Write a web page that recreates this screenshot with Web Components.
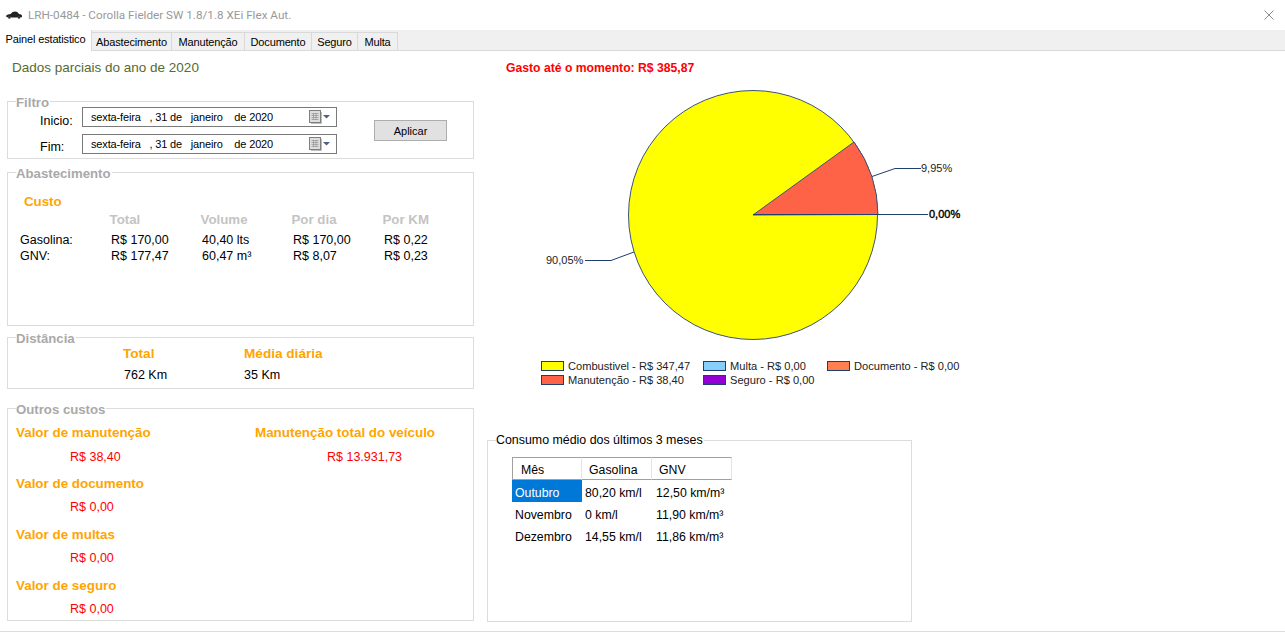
<!DOCTYPE html>
<html lang="pt-BR">
<head>
<meta charset="utf-8">
<title>Painel estatistico</title>
<style>
  html, body { margin: 0; height: 100%; background: #fff; overflow: hidden; }
  body { font: 12px/16px "Liberation Sans", Arial, sans-serif; color: #000; }
</style>
</head>
<body>
<app-window>
  <title-bar>LRH-0484 - Corolla Fielder SW 1.8/1.8 XEi Flex Aut.</title-bar>
  <tab-strip></tab-strip>
  <tab-panel>
    <div slot="left">
      <panel-heading>Dados parciais do ano de 2020</panel-heading>
      <group-box label="Filtro" style="height:58px"><filter-form></filter-form></group-box>
      <group-box label="Abastecimento" style="height:154px;margin-top:13px"><fuel-costs></fuel-costs></group-box>
      <group-box label="Distância" style="height:52px;margin-top:11px"><distance-stats></distance-stats></group-box>
      <group-box label="Outros custos" style="height:213px;margin-top:19px"><other-costs></other-costs></group-box>
    </div>
    <div slot="right">
      <spent-total>Gasto até o momento: R$ 385,87</spent-total>
      <pie-chart></pie-chart>
      <chart-legend></chart-legend>
      <group-box label="Consumo médio dos últimos 3 meses" plain style="width:425px;height:182px;margin-top:53px"><list-view></list-view></group-box>
    </div>
  </tab-panel>
</app-window>

<script>
class AppWindow extends HTMLElement {
  constructor() {
    super();
    this.attachShadow({mode: 'open'}).innerHTML = `
      <style>
        :host { display: flex; flex-direction: column; height: 632px; }
      </style>
      <slot></slot>`;
  }
}

class TitleBar extends HTMLElement {
  constructor() {
    super();
    this.attachShadow({mode: 'open'}).innerHTML = `
      <style>
        :host { display: flex; align-items: center; height: 30px; padding: 0 11px 0 6px; color: #999; font: 11.7px Roboto, "Liberation Sans", sans-serif; }
        .title { flex: 1; margin-left: 6px; }
        svg { display: block; }
      </style>
      <svg width="16" height="8" viewBox="0 0 16 8">
        <path d="M0 5.5 Q0 4 2 3.6 L4.6 3 Q6.5 .6 9 .6 Q11.5 .6 13 3 Q15.6 3.3 16 4.6 L16 6 L14.6 6.6 A1.7 1.7 0 0 0 11.4 6.6 L5 6.6 A1.7 1.7 0 0 0 1.8 6.6 Z" fill="#222"/>
        <circle cx="3.4" cy="6.4" r="1.3" fill="#333"/><circle cx="13" cy="6.4" r="1.3" fill="#333"/>
      </svg>
      <span class="title"><slot></slot></span>
      <svg width="10" height="10" viewBox="0 0 10 10"><path d="M.5 .5 L9.5 9.5 M9.5 .5 L.5 9.5" stroke="#8a8a8a" stroke-width="1"/></svg>`;
  }
}

class TabStrip extends HTMLElement {
  constructor() {
    super();
    const tabs = [['Painel estatistico', 92], ['Abastecimento', 80], ['Manutenção', 73], ['Documento', 67], ['Seguro', 46], ['Multa', 40]];
    this.attachShadow({mode: 'open'}).innerHTML = `
      <style>
        :host { display: flex; align-items: flex-end; height: 21px; background: #f0f0f0; box-shadow: inset 0 -1px 0 #d9d9d9; font-size: 11px; letter-spacing: -.15px; }
        .tab { box-sizing: border-box; height: 19px; line-height: 18px; text-align: center; background: #f0f0f0; border: 1px solid #d9d9d9; border-left: 0; }
        .tab.active { height: 21px; line-height: 19px; background: #fff; border-bottom: 0; border-top: 0; }
      </style>
      ${tabs.map((t, i) => `<div class="tab ${i == 0 ? 'active' : ''}" style="width:${t[1]}px">${t[0]}</div>`).join('')}`;
  }
}

class TabPanel extends HTMLElement {
  constructor() {
    super();
    this.attachShadow({mode: 'open'}).innerHTML = `
      <style>
        :host { display: flex; flex: 1; border-bottom: 1px solid #dcdcdc; }
        .left { width: 467px; margin-left: 7px; padding-top: 9px; }
        .right { margin-left: 13px; padding-top: 9px; }
      </style>
      <div class="left"><slot name="left"></slot></div>
      <div class="right"><slot name="right"></slot></div>`;
  }
}

class PanelHeading extends HTMLElement {
  constructor() {
    super();
    this.attachShadow({mode: 'open'}).innerHTML = `
      <style>
        :host { display: block; margin: 0 0 25px 5px; font-size: 13.5px; line-height: 16px; color: #556b2f; }
      </style>
      <slot></slot>`;
  }
}

class SpentTotal extends HTMLElement {
  constructor() {
    super();
    this.attachShadow({mode: 'open'}).innerHTML = `
      <style>
        :host { display: block; margin-left: 19px; font-weight: bold; font-size: 12.2px; line-height: 16px; color: #f00; }
      </style>
      <slot></slot>`;
  }
}

class GroupBox extends HTMLElement {
  constructor() {
    super();
    this.attachShadow({mode: 'open'}).innerHTML = `
      <style>
        :host { display: block; position: relative; box-sizing: border-box; border: 1px solid #dcdcdc; }
        .legend { position: absolute; top: -7px; left: 8px; padding-right: 1px; background: #fff; font: bold 13.2px/15px "Liberation Sans", Arial, sans-serif; color: #a9a9a9; white-space: nowrap; }
        :host([plain]) .legend { font-weight: normal; font-size: 12.4px; color: #000; top: -8px; }
      </style>
      <div class="legend">${this.getAttribute('label')}</div>
      <slot></slot>`;
  }
}

class DatePicker extends HTMLElement {
  constructor() {
    super();
    this.attachShadow({mode: 'open'}).innerHTML = `
      <style>
        :host { display: flex; align-items: center; box-sizing: border-box; width: 255px; height: 20px; padding: 0 6px 0 8px; border: 1px solid #7a7a7a; background: #fff; }
        .value { flex: 1; white-space: pre; font-size: 11px; letter-spacing: -.15px; }
        svg { display: block; }
      </style>
      <span class="value"><slot></slot></span>
      <svg width="21" height="14" viewBox="0 0 21 14">
        <rect x=".5" y=".5" width="11" height="12" fill="#dedede" stroke="#7f7f7f"/>
        <path d="M12.5 2 V13.5 H2" fill="none" stroke="#bdbdbd"/>
        <path d="M2.5 3.5 H9.5 M2.5 5.5 H9.5 M2.5 7.5 H9.5 M2.5 9.5 H9.5 M4.5 3 V10 M7 3 V10" stroke="#9a9a9a" stroke-width=".8"/>
        <path d="M14 5 H21 L17.5 8.5 Z" fill="#4d6185"/>
      </svg>`;
  }
}

class FilterForm extends HTMLElement {
  constructor() {
    super();
    this.attachShadow({mode: 'open'}).innerHTML = `
      <style>
        :host { display: grid; grid-template-columns: 42px 255px 73px; grid-template-rows: 20px 20px; row-gap: 7px; column-gap: 0; padding: 5px 0 0 32px; }
        .lbl { padding-top: 6px; line-height: 16px; font-size: 12.5px; }
        .lbl.fim { padding-top: 5px; }
        button { grid-column: 3; grid-row: 1 / 3; margin: 13px 0 0 37px; width: 73px; height: 21px; padding: 0; box-sizing: border-box; border: 1px solid #adadad; background: #e1e1e1; font: 11px "Liberation Sans", Arial, sans-serif; color: #000; }
      </style>
      <div class="lbl">Inicio:</div>
      <date-picker>sexta-feira   , 31 de   janeiro    de 2020</date-picker>
      <div class="lbl fim">Fim:</div>
      <date-picker>sexta-feira   , 31 de   janeiro    de 2020</date-picker>
      <button>Aplicar</button>`;
  }
}

class FuelCosts extends HTMLElement {
  constructor() {
    super();
    const rows = [['Gasolina:', 'R$ 170,00', '40,40 lts', 'R$ 170,00', 'R$ 0,22'], ['GNV:', 'R$ 177,47', '60,47 m³', 'R$ 8,07', 'R$ 0,23']];
    this.attachShadow({mode: 'open'}).innerHTML = `
      <style>
        :host { display: block; padding: 21px 0 0 12px; font-size: 12.5px; }
        .custo { margin-left: 4px; font: bold 13.3px/16px "Liberation Sans", Arial, sans-serif; color: #ffa500; }
        .grid { display: grid; grid-template-columns: 91px 91px 91px 91px 91px; grid-template-rows: 20px 16px 16px; margin-top: 2px; }
        .head { font-weight: bold; font-size: 13.3px; color: #c4c4c4; margin-left: -1.5px; }
      </style>
      <div class="custo">Custo</div>
      <div class="grid">
        <div class="head"></div><div class="head">Total</div><div class="head">Volume</div><div class="head">Por dia</div><div class="head">Por KM</div>
        ${rows.map(r => r.map(c => `<div>${c}</div>`).join('')).join('')}
      </div>`;
  }
}

class DistanceStats extends HTMLElement {
  constructor() {
    super();
    this.attachShadow({mode: 'open'}).innerHTML = `
      <style>
        :host { display: grid; grid-template-columns: 121px 121px; grid-auto-rows: 16px; row-gap: 5px; padding: 8px 0 0 115px; font-size: 12.5px; }
        b { color: #ffa500; font-size: 13.6px; }
      </style>
      <b>Total</b><b>Média diária</b>
      <div style="margin-left:1px">762 Km</div><div>35 Km</div>`;
  }
}

class CostItem extends HTMLElement {
  constructor() {
    super();
    this.attachShadow({mode: 'open'}).innerHTML = `
      <style>
        :host { display: block; height: 51px; box-sizing: border-box; padding-top: 16px; }
        .label { font: bold 13.4px/16px "Liberation Sans", Arial, sans-serif; color: #ffa500; white-space: nowrap; }
        .value { margin-top: ${this.hasAttribute('first') ? 8 : 7}px; padding-left: ${this.getAttribute('indent')}px; font-size: 12.5px; line-height: 16px; color: #f00; }
      </style>
      <div class="label">${this.getAttribute('label')}</div>
      <div class="value"><slot></slot></div>`;
  }
}

class OtherCosts extends HTMLElement {
  constructor() {
    super();
    this.attachShadow({mode: 'open'}).innerHTML = `
      <style>
        :host { display: grid; grid-template-columns: 239px 1fr; padding-left: 8px; }
      </style>
      <div>
        <cost-item first label="Valor de manutenção" indent="54">R$ 38,40</cost-item>
        <cost-item label="Valor de documento" indent="54">R$ 0,00</cost-item>
        <cost-item label="Valor de multas" indent="54">R$ 0,00</cost-item>
        <cost-item label="Valor de seguro" indent="54">R$ 0,00</cost-item>
      </div>
      <div>
        <cost-item first label="Manutenção total do veículo" indent="72">R$ 13.931,73</cost-item>
      </div>`;
  }
}

class PieChart extends HTMLElement {
  constructor() {
    super();
    this.attachShadow({mode: 'open'}).innerHTML = `
      <style>
        :host { display: block; width: 500px; height: 276px; margin-top: 7px; }
        svg { display: block; }
        text { font: 11px "Liberation Sans", Arial, sans-serif; fill: #222; }
      </style>
      <svg width="500" height="276" viewBox="487 83 500 276">
        <circle cx="753" cy="215" r="124.5" fill="#ffff00" stroke="#3b5378" stroke-width="1"/>
        <path d="M753 215 L878 214.5 A124.5 124.5 0 0 0 854 142 Z" fill="#ff6347" stroke="#3b5378" stroke-width="1"/>
        <path d="M872 176.5 L895 168.5 H921" fill="none" stroke="#1f3d6e"/>
        <path d="M753 214.5 H928" fill="none" stroke="#1f3d6e"/>
        <path d="M634 252 L611 260.5 H585" fill="none" stroke="#1f3d6e"/>
        <text x="921" y="172">9,95%</text>
        <text x="929" y="218" style="stroke:#000;stroke-width:.4;fill:#000">0,00%</text>
        <text x="546" y="264">90,05%</text>
      </svg>`;
  }
}

class ChartLegend extends HTMLElement {
  constructor() {
    super();
    const items = [['#ffff00', 'Combustivel - R$ 347,47'], ['#87cefa', 'Multa - R$ 0,00'], ['#ff7f50', 'Documento - R$ 0,00'], ['#ff6347', 'Manutenção - R$ 38,40'], ['#9400d3', 'Seguro - R$ 0,00']];
    this.attachShadow({mode: 'open'}).innerHTML = `
      <style>
        :host { display: grid; grid-template-columns: 162px 124px auto; grid-auto-rows: 14px; margin-left: 54px; font-size: 11.1px; color: #222; }
        .item { display: flex; align-items: center; gap: 4px; white-space: nowrap; }
        i { display: block; box-sizing: border-box; width: 23px; height: 10px; border: 1px solid #1f3d6e; }
      </style>
      ${items.map(it => `<div class="item"><i style="background:${it[0]}"></i>${it[1]}</div>`).join('')}`;
  }
}

class ListView extends HTMLElement {
  constructor() {
    super();
    const rows = [['Outubro', '80,20 km/l', '12,50 km/m³'], ['Novembro', '0 km/l', '11,90 km/m³'], ['Dezembro', '14,55 km/l', '11,86 km/m³']];
    this.attachShadow({mode: 'open'}).innerHTML = `
      <style>
        :host { display: grid; grid-template-columns: 70px 70px 80px; grid-auto-rows: 22px; width: 220px; margin: 16px 0 0 24px; font-size: 12.3px; }
        .th { box-sizing: border-box; height: 23px; padding-left: 7px; line-height: 25px; border-top: 1px solid #a0a0a0; border-bottom: 1px solid #a0a0a0; border-right: 1px solid #e5e5e5; }
        .th.first { border-left: 1px solid #a0a0a0; padding-left: 8px; }
        .td { padding-left: 3px; line-height: 27px; height: 22px; white-space: nowrap; margin-top: 1px; }
        .td.last { padding-left: 4px; }
        .sel { background: #0078d7; color: #fff; }
      </style>
      <div class="th first">Mês</div><div class="th">Gasolina</div><div class="th">GNV</div>
      ${rows.map((r, i) => r.map((c, j) => `<div class="td ${i == 0 && j == 0 ? 'sel' : ''} ${j == 2 ? 'last' : ''}">${c}</div>`).join('')).join('')}`;
  }
}

customElements.define('app-window', AppWindow);
customElements.define('title-bar', TitleBar);
customElements.define('tab-strip', TabStrip);
customElements.define('tab-panel', TabPanel);
customElements.define('panel-heading', PanelHeading);
customElements.define('spent-total', SpentTotal);
customElements.define('group-box', GroupBox);
customElements.define('date-picker', DatePicker);
customElements.define('filter-form', FilterForm);
customElements.define('fuel-costs', FuelCosts);
customElements.define('distance-stats', DistanceStats);
customElements.define('cost-item', CostItem);
customElements.define('other-costs', OtherCosts);
customElements.define('pie-chart', PieChart);
customElements.define('chart-legend', ChartLegend);
customElements.define('list-view', ListView);
</script>
</body>
</html>
